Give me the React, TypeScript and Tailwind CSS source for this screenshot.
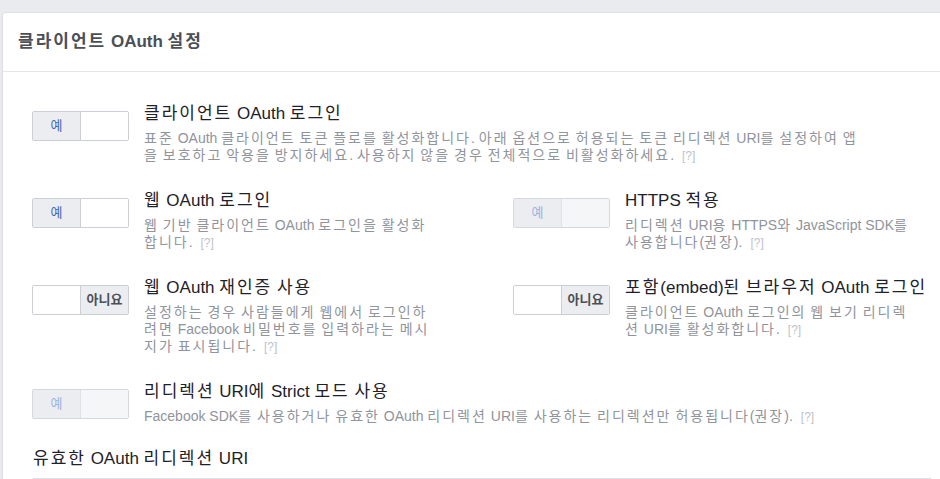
import React from "react"

const font = "font-['Liberation_Sans','Noto_Sans_CJK_KR',sans-serif]"

// Hangul runs are set a little wider, like the original Korean face
function Ko({ text }: { text: string }) {
  const parts = text.split(/([가-힣]+)/)
  return (
    <>
      {parts.map((p, i) =>
        /[가-힣]/.test(p) ? (
          <span key={i} className="tracking-[2px]">
            {p}
          </span>
        ) : (
          <React.Fragment key={i}>{p}</React.Fragment>
        )
      )}
    </>
  )
}

function Toggle({ on, disabled }: { on: boolean; disabled?: boolean }) {
  const border = disabled ? "border-[#d5d8dd]" : "border-[#ccd0d5]"
  return (
    <div className={`mt-3 flex h-[30px] w-[97px] shrink-0 overflow-hidden rounded-[2px] border ${border}`}>
      {on ? (
        <>
          <div
            className={`flex w-[48px] items-center justify-center border-r text-[13px] ${
              disabled
                ? "border-[#dfe1e5] bg-[#ebedf0] text-[#9db3e0]"
                : "border-[#ccd0d5] bg-[#ebedf0] text-[#4267b2]"
            }`}
          >
            예
          </div>
          <div className={`flex-1 ${disabled ? "bg-[#f5f6f7]" : "bg-white"}`} />
        </>
      ) : (
        <>
          <div className="w-[48px] border-r border-[#ccd0d5] bg-white" />
          <div className="flex flex-1 items-center justify-center bg-[#ebedf0] text-[13px] font-bold text-[#4b4f56]">
            아니요
          </div>
        </>
      )}
    </div>
  )
}

function Help() {
  return <span className="ml-2 text-[12px] text-[#bec2c9]">[?]</span>
}

function Setting({
  title,
  lines,
  on,
  disabled,
}: {
  title: string
  lines: string[]
  on: boolean
  disabled?: boolean
}) {
  return (
    <div className="flex items-start gap-[15px]">
      <Toggle on={on} disabled={disabled} />
      <div className="mt-[3px] min-w-0">
        <div className="whitespace-nowrap text-[17px] leading-[24px] text-[#1d2129]">
          <Ko text={title} />
        </div>
        <div className="mt-1 text-[14px] leading-[17px] text-[#90949c]">
          {lines.map((l, i) => (
            <div key={i} className="whitespace-nowrap">
              <Ko text={l} />
              {i === lines.length - 1 && <Help />}
            </div>
          ))}
        </div>
      </div>
    </div>
  )
}

export default function App() {
  return (
    <div className={`h-[479px] w-[940px] overflow-hidden bg-[#e9ebee] pt-3 pl-[2px] ${font}`}>
      <div className="h-[600px] w-[1000px] rounded-[3px] border border-[#dddfe2] bg-white">
        <div className="flex h-[59px] items-center border-b border-[#e5e6e9] pl-[15px]">
          <h2 className="text-[17px] font-bold text-[#4b4f56]">
            <Ko text="클라이언트 OAuth 설정" />
          </h2>
        </div>

        <div className="flex flex-col gap-[21px] pt-[27px] pl-[29px]">
          <Setting
            on
            title="클라이언트 OAuth 로그인"
            lines={[
              "표준 OAuth 클라이언트 토큰 플로를 활성화합니다. 아래 옵션으로 허용되는 토큰 리디렉션 URI를 설정하여 앱",
              "을 보호하고 악용을 방지하세요. 사용하지 않을 경우 전체적으로 비활성화하세요.",
            ]}
          />

          <div className="grid grid-cols-[481px_481px]">
            <Setting
              on
              title="웹 OAuth 로그인"
              lines={["웹 기반 클라이언트 OAuth 로그인을 활성화", "합니다."]}
            />
            <Setting
              on
              disabled
              title="HTTPS 적용"
              lines={["리디렉션 URI용 HTTPS와 JavaScript SDK를", "사용합니다(권장)."]}
            />
          </div>

          <div className="grid grid-cols-[481px_481px]">
            <Setting
              on={false}
              title="웹 OAuth 재인증 사용"
              lines={[
                "설정하는 경우 사람들에게 웹에서 로그인하",
                "려면 Facebook 비밀번호를 입력하라는 메시",
                "지가 표시됩니다.",
              ]}
            />
            <Setting
              on={false}
              title="포함(embed)된 브라우저 OAuth 로그인"
              lines={["클라이언트 OAuth 로그인의 웹 보기 리디렉", "션 URI를 활성화합니다."]}
            />
          </div>

          <Setting
            on
            disabled
            title="리디렉션 URI에 Strict 모드 사용"
            lines={[
              "Facebook SDK를 사용하거나 유효한 OAuth 리디렉션 URI를 사용하는 리디렉션만 허용됩니다(권장).",
            ]}
          />

          <div>
            <div className="pl-[1px] text-[17px] leading-[24px] text-[#1d2129]">
              <Ko text="유효한 OAuth 리디렉션 URI" />
            </div>
            <div className="mt-[7px] h-[40px] w-[900px] rounded-[2px] border border-[#dddfe2]" />
          </div>
        </div>
      </div>
    </div>
  )
}
